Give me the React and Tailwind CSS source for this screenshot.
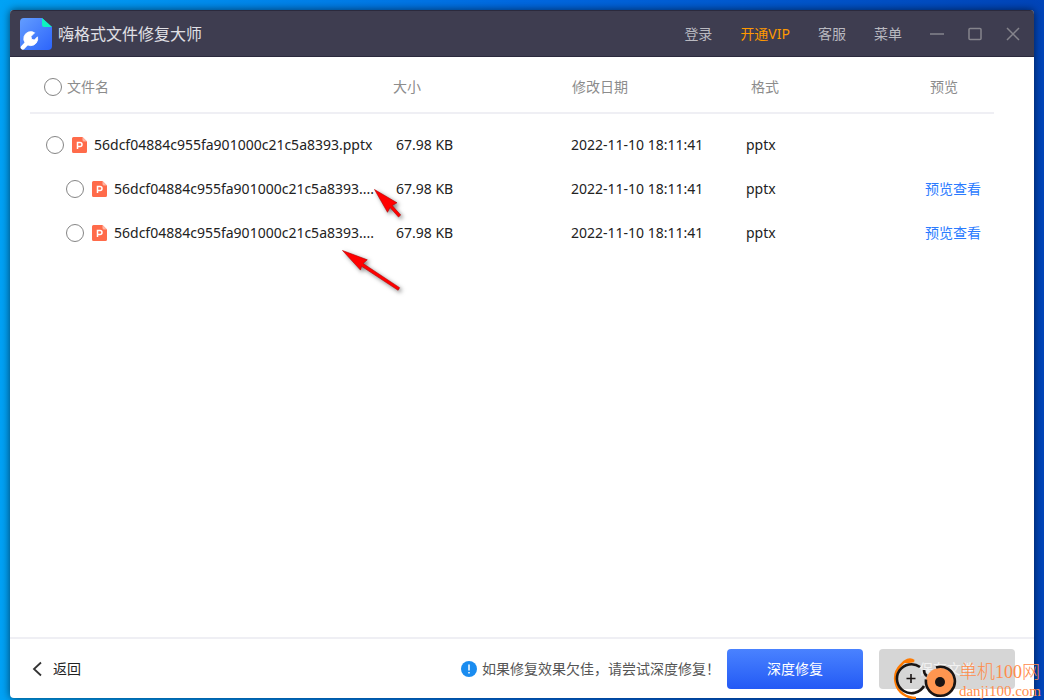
import React, { useState } from 'react'

const navLinks = [
    { label: '登录', color: 'text-[#b9b9c0]' },
    { label: '开通VIP', color: 'text-[#ff9900]' },
    { label: '客服', color: 'text-[#b9b9c0]' },
    { label: '菜单', color: 'text-[#b9b9c0]' }
]

const files = [
    { id: 1, name: '56dcf04884c955fa901000c21c5a8393.pptx', size: '67.98 KB', date: '2022-11-10 18:11:41', format: 'pptx', child: false },
    { id: 2, name: '56dcf04884c955fa901000c21c5a8393....', size: '67.98 KB', date: '2022-11-10 18:11:41', format: 'pptx', child: true },
    { id: 3, name: '56dcf04884c955fa901000c21c5a8393....', size: '67.98 KB', date: '2022-11-10 18:11:41', format: 'pptx', child: true }
]

function Logo() {
    return (
        <svg className="w-8 h-8 shrink-0" viewBox="0 0 32 32">
            <defs>
                <linearGradient id="logoFill" x1="0" y1="0" x2="1" y2="1">
                    <stop offset="0" stopColor="#639dff" />
                    <stop offset="1" stopColor="#2c64fb" />
                </linearGradient>
            </defs>
            <path d="M4 0H22L32 9V28a4 4 0 0 1-4 4H4a4 4 0 0 1-4-4V4a4 4 0 0 1 4-4z" fill="url(#logoFill)" />
            <path d="M22 0l10 9H24a2 2 0 0 1-2-2z" fill="#0cf5c0" />
            <path d="M14.600 14.800A7 7 0 1 0 17.500 18.800L14.300 22L11.600 21.300L11 18.400z" fill="#fff" stroke="#fff" strokeWidth="0.800" strokeLinejoin="round" />
            <path d="M7.500 24.500L2.800 29.500" stroke="#fff" strokeWidth="4.200" strokeLinecap="round" />
        </svg>
    )
}

function FileIcon() {
    return (
        <svg className="w-[15px] h-4 shrink-0" viewBox="0 0 15 16">
            <path d="M1.500 0H10.500L15 4.500V14.500a1.500 1.500 0 0 1-1.500 1.500h-12A1.500 1.500 0 0 1 0 14.500v-13A1.500 1.500 0 0 1 1.500 0z" fill="#ff6b4a" />
            <path d="M10.500 0L15 4.500h-3a1.500 1.500 0 0 1-1.500-1.500z" fill="#ffb5a3" />
            <path d="M5.500 12V5.500H8a2 2 0 0 1 0 4H5.500" fill="none" stroke="#fff" strokeWidth="1.500" />
        </svg>
    )
}

function CheckCircle({ label, checked, onChange }) {
    return (
        <input
            type="checkbox"
            aria-label={label}
            checked={checked}
            onChange={onChange}
            className="appearance-none w-[18px] h-[18px] shrink-0 rounded-full border border-[#858585] bg-white checked:bg-[#2f6bff]"
        />
    )
}

function TitleBar() {
    return (
        <header className="flex items-center h-[47px] pl-[10px] pr-[14px] bg-[#3e3d50] border-t border-b border-t-[#2b2a3d] border-b-[#2b2a3d] rounded-t">
            <Logo />
            <h1 className="ml-[6px] pt-px text-base text-[#e0e0e5]">嗨格式文件修复大师</h1>
            <nav className="ml-auto pt-px flex items-center gap-7 text-sm">
                {navLinks.map(link => (
                    <a key={link.label} href="#" className={link.color}>{link.label}</a>
                ))}
            </nav>
            <div className="ml-7 flex items-center gap-6 text-[#85848c]">
                <button type="button" aria-label="最小化">
                    <svg className="block w-[14px] h-[14px]" viewBox="0 0 14 14" stroke="currentColor" strokeWidth="1.500"><path d="M0 7h14" /></svg>
                </button>
                <button type="button" aria-label="最大化">
                    <svg className="block w-[14px] h-[14px]" viewBox="0 0 14 14" fill="none" stroke="currentColor" strokeWidth="1.500"><rect x="1" y="1.500" width="12" height="11" rx="1" /></svg>
                </button>
                <button type="button" aria-label="关闭">
                    <svg className="block w-[14px] h-[14px]" viewBox="0 0 14 14" fill="none" stroke="currentColor" strokeWidth="1.500"><path d="M1 1l12 12M13 1L1 13" /></svg>
                </button>
            </div>
        </header>
    )
}

function FileTable() {
    const [selected, setSelected] = useState([])

    const toggle = (id) => {
        setSelected(prev => prev.includes(id) ? prev.filter(x => x !== id) : [...prev, id])
    }

    const toggleAll = () => {
        setSelected(prev => prev.length === files.length ? [] : files.map(f => f.id))
    }

    return (
        <table className="w-full table-fixed text-sm text-left">
            <colgroup>
                <col />
                <col className="w-[178px]" />
                <col className="w-[175px]" />
                <col className="w-[179px]" />
                <col className="w-[69px]" />
            </colgroup>
            <thead className="text-[#8c8c8c]">
                <tr className="h-14 border-b-2 border-[#efeff4]">
                    <th className="font-normal pt-1">
                        <div className="flex items-center gap-[5px] pl-[14px]">
                            <CheckCircle label="全选" checked={selected.length === files.length} onChange={toggleAll} />
                            文件名
                        </div>
                    </th>
                    <th className="font-normal pt-1">大小</th>
                    <th className="font-normal pt-1 pl-px">修改日期</th>
                    <th className="font-normal pt-1 pl-[5px]">格式</th>
                    <th className="font-normal pt-1 pl-[5px]">预览</th>
                </tr>
            </thead>
            <tbody className="text-[#222] before:block before:h-[9px] before:content-['']">
                {files.map(file => (
                    <tr key={file.id} className="h-11">
                        <td>
                            <div className={file.child ? 'flex items-center pl-9' : 'flex items-center pl-4'}>
                                <CheckCircle label={file.name} checked={selected.includes(file.id)} onChange={() => toggle(file.id)} />
                                <span className="ml-2 mr-[7px] shrink-0"><FileIcon /></span>
                                <span className="whitespace-nowrap">{file.name}</span>
                            </div>
                        </td>
                        <td className="pl-[3px]">{file.size}</td>
                        <td>{file.date}</td>
                        <td>{file.format}</td>
                        <td className="whitespace-nowrap">
                            {file.child && <a href="#" className="text-[#2b7bff]">预览查看</a>}
                        </td>
                    </tr>
                ))}
            </tbody>
        </table>
    )
}

// red pointers drawn over the list
function Arrows() {
    return (
        <svg className="absolute left-[325px] top-[175px] w-[90px] h-[125px] pointer-events-none drop-shadow-[2px_2px_2px_rgba(0,0,0,0.5)]" viewBox="325 175 90 125">
            <g fill="#f00" stroke="#b00000" strokeWidth="0.600" strokeLinejoin="round">
                <path d="M374.500 189.500L397 202.800l-4.800 2.700 8.500 9.500-2.200 2-8.500-9.500-2.500 4.800z" />
                <path d="M342.500 250.500L367.300 259.800l-4.200 3.700 36.500 24.200-1.500 2.600-36.500-24-1.100 3.800z" />
            </g>
        </svg>
    )
}

function Watermark() {
    return (
        <div className="absolute right-[3px] bottom-0 flex items-end gap-[2px] pointer-events-none">
            <svg className="w-[64px] h-[42px]" viewBox="895 658 64 42" fill="none">
                <path d="M916 661c-4-3-9-1-13 4-5 5-7 12-5 19 2 8 10 14 20 14" stroke="#ff7a00" strokeWidth="2.500" />
                <path d="M905 663l6-4 6 3-6 1z" fill="#ff7a00" />
                <path d="M922 667A14.500 14.500 0 1 0 926 686" stroke="#1a1514" strokeWidth="2.600" />
                <path d="M908.500 678.500h9M913 674v9" stroke="#1a1514" strokeWidth="1.600" />
                <circle cx="942" cy="682" r="14" fill="#ff9650" />
                <path d="M926 670c0 3 1 5 3 6M938 667.500a14.500 14.500 0 1 1-10 12" stroke="#1a1514" strokeWidth="2.600" />
                <circle cx="942" cy="682" r="5" fill="#1a1514" />
            </svg>
            <div className="font-['Liberation_Serif','Noto_Sans_CJK_SC',serif] font-light text-[#ff8c4a] whitespace-nowrap">
                <div className="text-lg leading-5">单机100网</div>
                <div className="text-[15px] leading-[18px]">danji100.com</div>
            </div>
        </div>
    )
}

function App() {
    return (
        <div className="relative flex flex-col min-h-screen px-[10px] pt-[10px] pb-[2px] bg-linear-to-r from-[#00a2f5] via-[#0068e0] to-[#0044b8] font-['Noto_Sans','Noto_Sans_CJK_SC',sans-serif]">
            <div className="flex-1 flex flex-col bg-white rounded shadow-[0_0_8px_rgba(0,0,0,0.6)]">
                <TitleBar />
                <main className="flex-1 pl-5 pr-10">
                    <FileTable />
                </main>
                <footer className="flex items-center h-[61px] pl-[22px] pr-[19px] border-t-2 border-[#efeff4] text-sm">
                    <button type="button" className="flex items-center gap-[11px] text-[#222]">
                        <svg className="w-[10px] h-4" viewBox="0 0 10 16" fill="none" stroke="#333" strokeWidth="1.800"><path d="M9 1.500L2 8l7 6.500" /></svg>
                        返回
                    </button>
                    <div className="ml-auto flex items-center gap-[5px] text-[#555]">
                        <svg className="w-4 h-4" viewBox="0 0 16 16">
                            <circle cx="8" cy="8" r="8" fill="#1a8cf0" />
                            <path d="M8 3.500v6M8 11v1.500" stroke="#fff" strokeWidth="1.500" />
                        </svg>
                        <p>如果修复效果欠佳，请尝试深度修复！</p>
                    </div>
                    <button type="button" className="ml-[7px] w-[136px] h-10 rounded text-white bg-linear-to-b from-[#4a82ff] to-[#2459f5]">深度修复</button>
                    <button type="button" disabled className="ml-4 w-[136px] h-10 rounded text-[#f2f2f2] bg-[#d6d6d6]">保存文件</button>
                </footer>
            </div>
            <Arrows />
            <Watermark />
        </div>
    )
}

export default App
